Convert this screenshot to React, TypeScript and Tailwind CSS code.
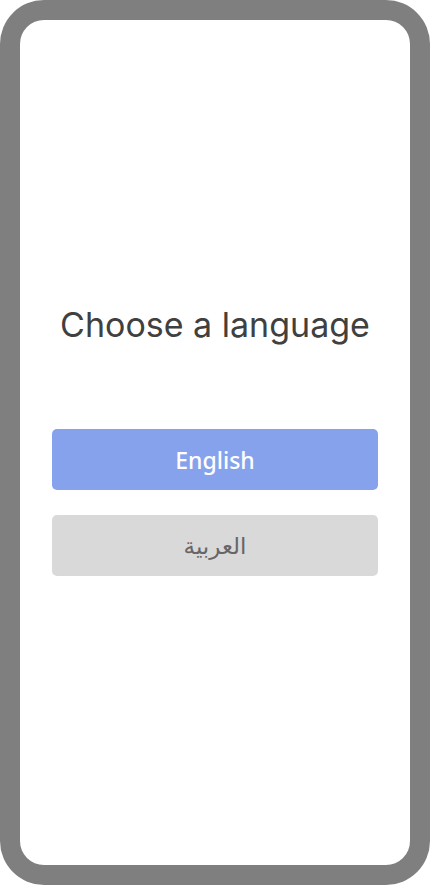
import React from "react";

export default function App() {
  return (
    <div className="w-[431px] h-[885px] bg-white">
      <div className="w-[430px] h-[885px] bg-[#7f7f7f] rounded-[44px] p-[20px]">
        <div className="w-full h-full bg-white rounded-[24px] flex flex-col items-center">
          <h1
            className="mt-[285px] text-[34px] leading-[40px] text-[#404040] font-normal whitespace-nowrap"
            style={{ fontFamily: "Inter, sans-serif" }}
          >
            Choose a language
          </h1>
          <div className="mt-[84px] w-[326px] flex flex-col gap-[25px]">
            <button
              className="h-[61px] w-full rounded-[5px] bg-[#87a2ec] text-white text-[23px] font-medium pt-[2px]"
              style={{ fontFamily: "'Noto Sans', sans-serif" }}
            >
              English
            </button>
            <button
              className="h-[61px] w-full rounded-[5px] bg-[#d9d9d9] text-[#666666] text-[23px]"
              style={{ fontFamily: "'Noto Sans', 'DejaVu Sans', sans-serif" }}
              dir="rtl"
            >
              العربية
            </button>
          </div>
        </div>
      </div>
    </div>
  );
}
